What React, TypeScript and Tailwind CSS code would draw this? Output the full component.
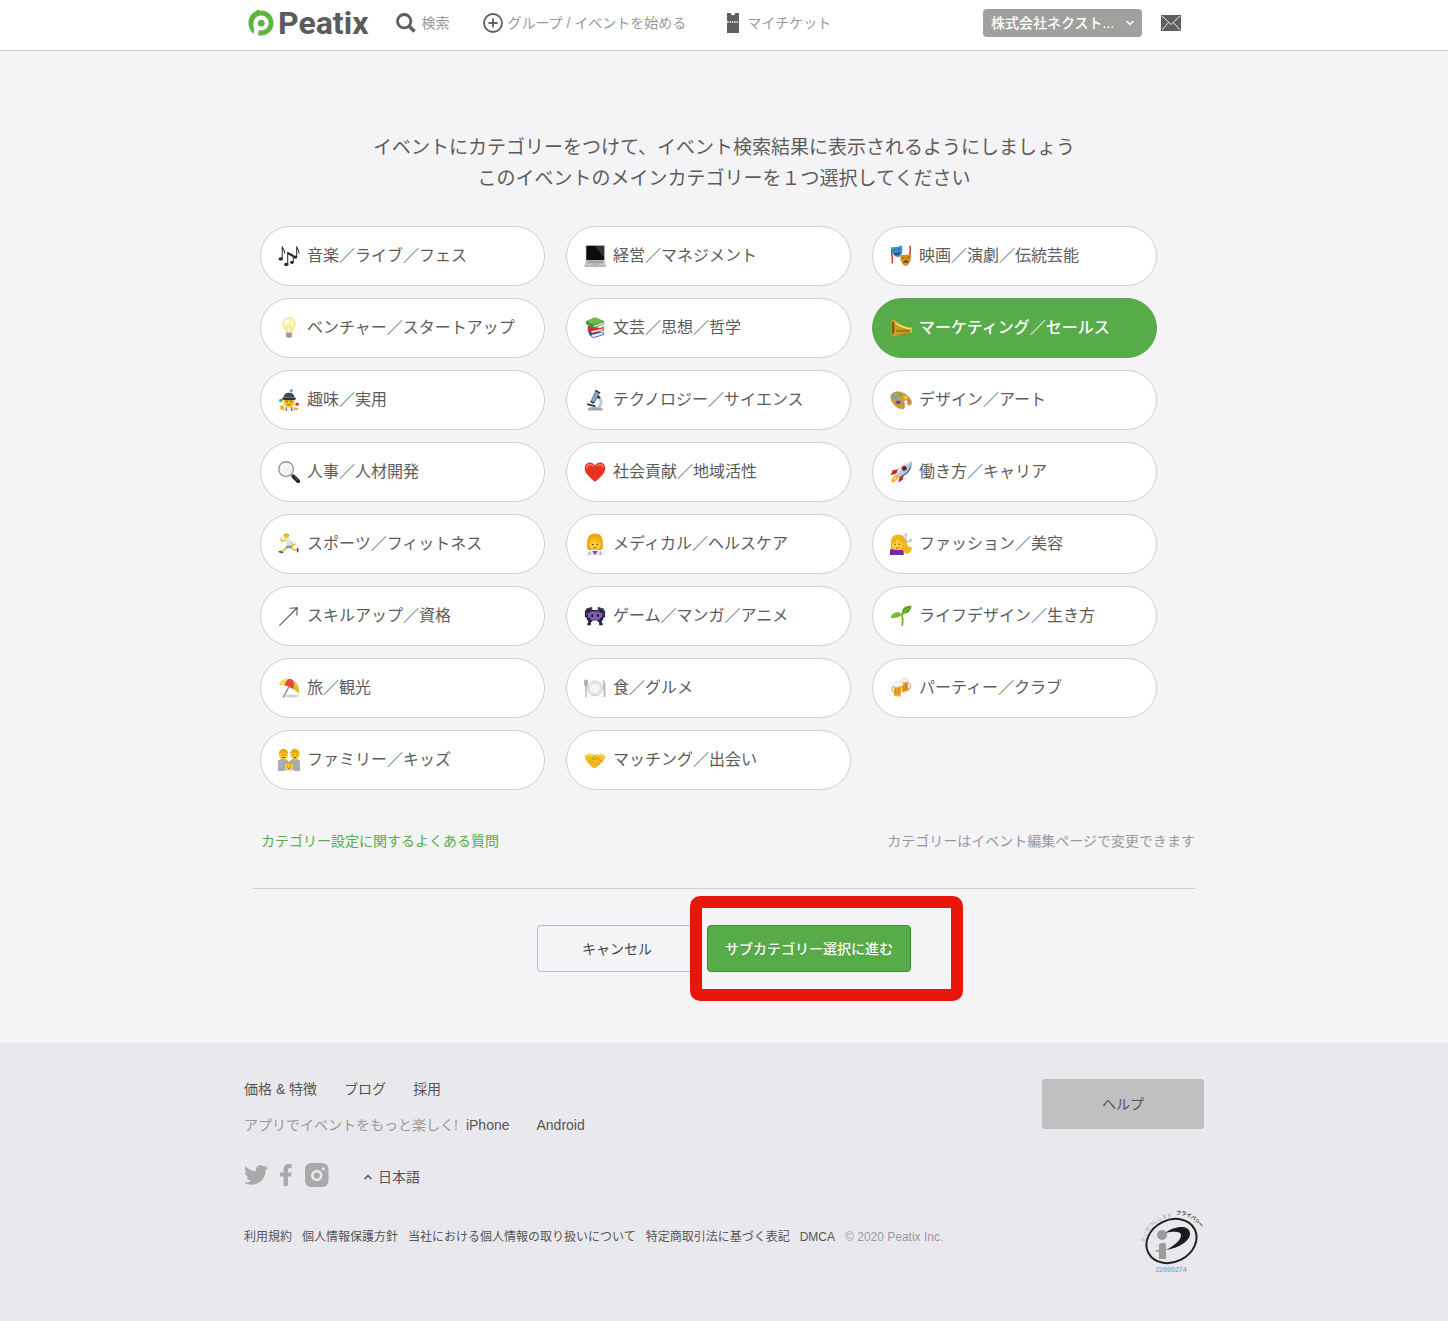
import { useState } from 'react';
import type { ReactNode } from 'react';
import { FaFacebookF, FaTwitter } from 'react-icons/fa';

const icons: Record<string, ReactNode> = {
  music: (
    <g fill="none" stroke="#1f2a33" strokeWidth="1.1">
      <path d="M4.600 15V1.400c.4 3.600 3.200 4 2.600 8M10.600 21V8.400l6 3.200V19M20.400 13V1.400c.4 3.600 3 4 2.400 8" />
      <path d="M10.600 8.800l6 3.200" strokeWidth="2.200" />
      <g fill="#1f2a33" stroke="none">
        <ellipse cx="3" cy="15.200" rx="2.400" ry="1.800" />
        <ellipse cx="9" cy="21.200" rx="2.400" ry="1.800" />
        <ellipse cx="15.200" cy="19" rx="2" ry="1.600" />
        <ellipse cx="18.800" cy="13.200" rx="2.300" ry="1.800" />
      </g>
    </g>
  ),
  bulb: (
    <g>
      <path d="M12 1C7.800 1 5.200 4.200 5.200 8c0 3.600 3 5 3.400 9h6.800c.4-4 3.400-5.400 3.400-9 0-3.800-2.600-7-6.800-7z" fill="#fdf3b4" stroke="#ecd67c" />
      <path d="M8 7.500c0-2.500 1.500-4 3.500-4" fill="none" stroke="#fffdf0" strokeWidth="2" />
      <path d="M10.500 16l-.8-6 2.300 1.500 2.300-1.500-.8 6" fill="none" stroke="#ecd88c" strokeWidth=".8" />
      <path d="M8.800 17h6.400v3.600L13.400 23h-2.800l-1.800-2.400z" fill="#b3b3b0" />
      <path d="M9 19h6M9.200 21h5.600" stroke="#6d6d6d" strokeWidth=".8" />
    </g>
  ),
  juggler: (
    <g>
      <path d="M6 24v-3l4-2h4.500l4 2v3z" fill="#e9edf2" />
      <path d="M9 20v4M15 20v4" stroke="#525d6b" strokeWidth="1.200" />
      <circle cx="12" cy="14" r="6.200" fill="#f8c522" />
      <path d="M6 11c0-5.500 2-7 6-7s6 1.500 6 7z" fill="#454b54" />
      <ellipse cx="12" cy="10.600" rx="7.800" ry="1.800" fill="#30363e" />
      <path d="M7 9.200h10" stroke="#6e7680" />
      <circle cx="9.800" cy="14" r=".8" fill="#5a3a10" />
      <circle cx="14.200" cy="14" r=".8" fill="#5a3a10" />
      <path d="M10 17.200h4" stroke="#a4572a" />
      <circle cx="14.500" cy="2" r="1.900" fill="#67a9ee" />
      <circle cx="3" cy="12.500" r="1.900" fill="#36b258" />
      <circle cx="21" cy="16.500" r="1.900" fill="#e03434" />
      <path d="M2 19l3-1.500 2 2.500-1 3H3zM22 21l-4-1-1.500 3h5.500z" fill="#f3b51c" />
    </g>
  ),
  magnifier: (
    <g>
      <path d="M14.500 14.500l3 3" stroke="#8b949c" strokeWidth="2.400" />
      <path d="M17 17l5 5" stroke="#20262c" strokeWidth="4.400" strokeLinecap="round" />
      <path d="M17.500 16.500l4.500 4.500" stroke="#6c757d" strokeWidth="1" />
      <circle cx="8.800" cy="8.800" r="8" fill="#f1f4f6" stroke="#87909a" strokeWidth="1.400" />
      <path d="M4.500 8.500c0-2.500 2-4.200 4.500-4.200" fill="none" stroke="#fff" strokeWidth="1.500" />
    </g>
  ),
  runner: (
    <g fill="none" strokeLinecap="round">
      <path d="M8 8l-4 1-.5-3M14 9.500l2 4 3-1.500" stroke="#f2bc28" strokeWidth="1.700" />
      <path d="M10 15l-3.500 4-3.500 1M13.500 15l3 3 4 .5" stroke="#f2bc28" strokeWidth="2" />
      <path d="M11 8.500l.5 4.500" stroke="#dde4ec" strokeWidth="5" />
      <path d="M10 15.500l4-.5" stroke="#8a94a2" strokeWidth="3" />
      <path d="M1.500 20.500l3.500.8M21.500 17v3.500" stroke="#3a4a99" strokeWidth="1.700" />
      <circle cx="9" cy="3.600" r="2.700" fill="#f5c22c" />
      <path d="M6.600 2.600c1-2 4-2 5 0" stroke="#d89a10" strokeWidth="1.200" />
    </g>
  ),
  arrow: <path d="M1.500 22.500L21 3M12.500 3.500L21 3l-.5 8.500" fill="none" stroke="#555" strokeWidth="1.200" />,
  umbrella: (
    <g>
      <ellipse cx="15" cy="20.800" rx="8" ry="1.600" fill="#d8d3cc" />
      <path d="M13 9L5.500 22.500" stroke="#8b8378" strokeWidth="1.300" />
      <path d="M1 8.500C3 3 9 .5 14.500 2.500 20.500 4.500 24 11 23 18.500c-3-3.500-6-5-10-7S5.500 8.500 1 8.500z" fill="#e0bd3c" />
      <path d="M12 2c-3 2-4.500 4.500-5 7 2 .2 4 1.200 6 2.200 1.200.6 2.400 1.200 3.500 1.900C18.500 9 17.500 4 14.500 2.500z" fill="#e4483c" />
      <path d="M12 2c-5 0-8.500 2.500-11 6.500 2.500-.6 4-.2 6 .5.500-2.500 2-5 5-7z" fill="#f2dc62" />
    </g>
  ),
  family: (
    <g>
      <path d="M0 24V13.500c0-2 3-2.500 6-2.500s5 1 5 3v10zM13 24V13.500c0-2 3-2.500 6-2.500s5 1 5 3v10z" fill="#a9abae" />
      <circle cx="6" cy="6.300" r="5" fill="#f8c928" />
      <circle cx="18.500" cy="6.300" r="5" fill="#f8c928" />
      <path d="M1 5.500C1 1.500 3.500 0 6 0s5 1.500 5 5.500C9 3.500 3 3.500 1 5.500zM13.500 5.500c0-4 2.500-5.500 5-5.500s5 1.500 5 5.500c-2-2-8-2-10 0z" fill="#e8a90f" />
      <path d="M4 6.500h1M7.500 6.500h1M16.500 6.500h1M20 6.500h1M4.800 9.200h2.600M17.200 9.200h2.600" stroke="#70480d" strokeWidth="1.100" />
      <path d="M6.500 24c0-2 2-2.500 5.500-2.500s5.500.5 5.500 2.500z" fill="#dcdfe2" />
      <circle cx="12" cy="18.500" r="4.500" fill="#f9cc30" />
      <path d="M7.500 17.500c.5-5 8.500-5 9 0-2-1.500-7-1.500-9 0z" fill="#e5a80f" />
      <path d="M10 18.800h1M13.200 18.800h1M11 21h2" stroke="#70480d" />
    </g>
  ),
  laptop: (
    <g>
      <path d="M2 .5h20.500v16.500H2z" fill="#7d8084" />
      <path d="M2.800 1h19v15.500h-19z" fill="#0b0c0e" />
      <path d="M12 1h9.800v13z" fill="#303338" />
      <path d="M2 17h20.500l1.500 5.500H.5z" fill="#c4c6c9" />
      <path d="M4 17.800h16.500l.8 2H3.300z" fill="#9b9ea2" />
      <path d="M9.500 20.500h5.500l.4 1.500H9z" fill="#afb1b5" />
      <path d="M.5 22.500H24v1.200H.5z" fill="#989a9d" />
    </g>
  ),
  books: (
    <g>
      <path d="M4 14.500l15 2.500 2.500-1v3.500L10 23l-4-3z" fill="#2e56a3" />
      <path d="M8 19.500l12.500-2.500v2L9.500 22z" fill="#eef0f2" />
      <path d="M4 9.500l14 2.500 3.500-2v5l-12.500 3-5-3.500z" fill="#cf2f2b" />
      <path d="M8 15.500l12.500-3v2L8.500 17.300z" fill="#f3efe9" />
      <path d="M2 4.500l10-4 10 4v3.500l-11.500 4L2.500 8z" fill="#3c8f34" />
      <path d="M2 4.500l10-4 10 4L10.500 8.500z" fill="#6cbb4c" />
      <path d="M10.500 9.500L21.500 5.700v1.700L10.500 11.200z" fill="#edf1e9" />
    </g>
  ),
  microscope: (
    <g>
      <path d="M4 23.500c0-2.500 1.500-3.500 4-3.500h9c2 0 3.500 1 3.500 3.500z" fill="#93a7b6" />
      <path d="M14 8c5 1.500 6.500 8.500 1.500 12.500" fill="none" stroke="#b7cbd8" strokeWidth="3" />
      <path d="M3.500 16.500l9 2.500" stroke="#2d353d" strokeWidth="2" />
      <path d="M12 2.500l5 3-5 9.500-4.500-2.500z" fill="#6f8da3" />
      <path d="M12.500 4.500l1.500 1-4.500 8" fill="none" stroke="#c2dceb" />
      <path d="M13 .8l5 3-1 1.500-5.500-3zM7.500 12.500l4 2.200-.8 1.600-4-2.200z" fill="#2d353d" />
      <circle cx="16" cy="9" r="1.700" fill="#36404a" />
    </g>
  ),
  heart: (
    <g>
      <path d="M12 23C8 19 .8 14.500 .8 8 .8 4 3.300 1.500 6.500 1.500c2.500 0 4.500 1.500 5.500 3.500 1-2 3-3.500 5.500-3.500 3.200 0 5.700 2.500 5.700 6.500C23.200 14.500 16 19 12 23z" fill="#e8321f" />
      <path d="M3 8c0-2.500 1.500-4 3.800-4 1.800 0 3.200 1 4 2.200M14 5.500C15 4.400 16 4 17.300 4c2 0 3.300 1.200 3.500 3" fill="none" stroke="#f68272" strokeWidth="1.500" />
    </g>
  ),
  doctor: (
    <g>
      <path d="M3.500 16C2.500 5 5.500 .5 12 .5S21.500 5 20.500 16c0 1.500-1.500 2.500-3 2.500H6.500c-1.500 0-3-1-3-2.500z" fill="#e9a90e" />
      <path d="M3 24c0-3.500 3-4.500 9-4.500s9 1 9 4.500z" fill="#dde4eb" />
      <path d="M9 19.500h6l-3 4.500z" fill="#8f45b3" />
      <circle cx="12" cy="12.500" r="6.300" fill="#fbd03a" />
      <path d="M5 12C5 3 18 1.500 19 12c-4 0-6-1.500-8-4-1.500 2.500-3 3.500-6 4z" fill="#f4b91c" />
      <circle cx="9.500" cy="12.500" r=".9" fill="#5b3b0d" />
      <circle cx="14.500" cy="12.500" r=".9" fill="#5b3b0d" />
      <path d="M10 15.700c1 1 3 1 4 0" fill="none" stroke="#b04625" />
      <path d="M6 20V24M18 20V24" stroke="#9ba9b5" />
    </g>
  ),
  alien: (
    <g>
      <path d="M1 6h1.500V3.500H6V2.500h3v3h6v-3h3v1h3.500V6H23v7.500h-2v3h-1.500v3.500h1V22h-4v-3.500H15V17H9v1.500H7.500V22h-4v-2h1v-3.500H3v-3H1z" fill="#2a2238" />
      <path d="M7 7h10v1.500h2.500V14H17v2H7v-2H4.500V8.500H7z" fill="#7f62b8" />
      <path d="M2.500 8H4v3.500H2.500zM20 8h1.500v3.500H20zM7 4h1.500v2H7zM15.500 4H17v2h-1.500z" fill="#5d4791" />
      <path d="M8 10h2v3H8zM14 10h2v3h-2z" fill="#17121f" />
    </g>
  ),
  plate: (
    <g>
      <circle cx="12" cy="12.500" r="8.200" fill="#e6e7e9" stroke="#c3c5c8" strokeWidth=".8" />
      <circle cx="12" cy="12.500" r="5.800" fill="#f5f5f6" stroke="#d3d4d7" strokeWidth=".7" />
      <path d="M.8 3v5c0 1 .5 1.500 1.400 1.700V22M3.500 3v5c0 1-.5 1.500-1.300 1.700M2.200 3v6" fill="none" stroke="#98a4ae" strokeWidth="1.200" />
      <path d="M21 13V3.500c1.800 1 2.400 5 2 9.500v8.500h-1.300V13z" fill="#b5c0c9" stroke="#b3bdc6" strokeWidth=".8" />
    </g>
  ),
  handshake: (
    <g>
      <path d="M.5 7.500L5 5l7 1.500L19 5l4.500 3-3 6-7.500 6.500c-1.500 1-3 .5-4-.5l-6-6z" fill="#f2bd20" />
      <path d="M12 6.500l-3 4c1 1.500 3 1 5-.7l6 4.200" fill="none" stroke="#c78d0e" strokeWidth=".9" />
      <path d="M5.500 13.500l2-2M7.500 16l2-2M10 18l1.500-1.800M14.500 14l3 2.800M12.500 16l2.500 2.500" stroke="#c78d0e" strokeWidth=".9" />
      <path d="M2.500 8L5.500 6.500l5 1M13.500 7l4.500-1 3.500 2.500" fill="none" stroke="#ffe27a" strokeWidth="1.300" />
    </g>
  ),
  masks: (
    <g>
      <path d="M2 5c-1 5 1.500 8 .3 15M21.500 1c2 4-1 8 .5 13" fill="none" stroke="#cb3127" strokeWidth="1.600" />
      <path d="M1 2.500c4 0 8-.5 12-2 1 5 .5 11-3.500 12.500C4.500 13.500 1.500 9 1 2.500z" fill="#3a8fd0" />
      <path d="M3.500 6.300l2-.8M8.500 5l2-.7M4.500 8.800c2 1.500 4.500 1 6-1-.5 3-4.500 4-6 1z" fill="#133d62" stroke="#133d62" strokeWidth=".9" />
      <path d="M11 10.500c4 .8 8 .5 12-1 .8 5-1 11.500-5.500 13.500C13 22 11 17 11 10.500z" fill="#d3912c" />
      <path d="M13.500 14l2 .4M18.800 14.100l2-.6M14.800 19c1.500-2.500 4-2.500 5 0-1.500-.8-3.500-.8-5 0z" fill="#5e350b" stroke="#5e350b" strokeWidth=".9" />
    </g>
  ),
  horn: (
    <g>
      <path d="M10 17.500l5 3 1.500-3" fill="none" stroke="#a57a16" strokeWidth="1.400" />
      <path d="M4 2.500C8 7 15 10 22.500 12v4.500L4 21z" fill="#c99a1e" />
      <path d="M5 5.500c5 4 10 6 17 7.500" fill="none" stroke="#f7e07a" strokeWidth="1.800" />
      <path d="M6 15.500c6-.5 10-.5 16-.5" fill="none" stroke="#94700f" strokeWidth="1.400" />
      <ellipse cx="3.800" cy="11.800" rx="2.800" ry="9.400" fill="#d2a529" />
      <ellipse cx="3.400" cy="12" rx="1.600" ry="7.400" fill="#7d5c10" />
      <path d="M22 11.300h2v5.600h-2z" fill="#e5bd3c" />
    </g>
  ),
  palette: (
    <g>
      <path d="M.8 9C.5 4.500 6 2 12 3.500c6 1.500 11 6.500 11.500 11 .2 2.500-1.500 4-3 3-1.500-.8-2.500-2.500-4-2-1.800.8.500 3.500-1 5.500-1 1.200-4.500 1-7.500-1C4 17.500 1 13 .8 9z" fill="#cf9844" stroke="#b27f35" strokeWidth=".5" />
      <ellipse cx="5.500" cy="8.500" rx="2.800" ry="2" fill="#40b5e8" />
      <ellipse cx="11" cy="6.300" rx="2.400" ry="1.600" fill="#4eb83d" />
      <ellipse cx="17" cy="9.300" rx="2.300" ry="1.700" fill="#eadb35" />
      <ellipse cx="20.500" cy="13.800" rx="1.700" ry="1.900" fill="#e26963" />
      <ellipse cx="9" cy="14.500" rx="2.800" ry="2" fill="#7441b0" />
      <circle cx="17.300" cy="14.200" r="1.800" fill="#fff" />
    </g>
  ),
  rocket: (
    <g>
      <path d="M7 15l2.500 2.500c-1 3-4 5-8 6 0-4 2-7 5.500-8.500z" fill="#f4a51f" />
      <path d="M6 17l1.500 1.500c-1 1.500-2.500 2-4 2.500.2-1.500 1-3 2.500-4z" fill="#fdea75" />
      <path d="M9 9L3 10l-2.500 5.500L7 14zM15 15l-1 5.500L9 23.500 10.500 17z" fill="#d3291f" />
      <path d="M6.500 14.500C9 7 14 1.500 23.500.5c-.5 9.500-6 14.500-13.500 17.500z" fill="#b9cbd9" />
      <path d="M9 12.500C12 6.500 16 3 21 2" fill="none" stroke="#f3f8fb" strokeWidth="1.600" />
      <path d="M9.500 17.500C17 14.500 22.500 9 23.500.5c1 11-6 15.500-13 17.500z" fill="#4473a6" />
      <circle cx="15.500" cy="8" r="2.500" fill="#243142" stroke="#cf3a30" />
    </g>
  ),
  haircut: (
    <g>
      <path d="M0 24v-6l4-1h8l3 2v5z" fill="#7b2aa5" />
      <path d="M1 17C0 7 2 1.500 9 1.500c6 0 8 4 9 8.500s3 6 6 5.500c-.5 5-3 7-6 7-2.500 0-3-3-4-4H5z" fill="#f2b51c" />
      <circle cx="8" cy="12.500" r="6" fill="#fcd03a" />
      <path d="M2 11.500C3 4.500 11 3 14 10.500c-3-.5-5-2-6-4-1.500 3-3 4-6 5z" fill="#eeae15" />
      <path d="M5 12.500h1.200M9.500 12.500h1.200" stroke="#5b3b0d" strokeWidth="1.400" />
      <path d="M6.300 16c1 .8 2.400.8 3.400 0" fill="none" stroke="#b04625" />
      <path d="M17.500 3.500v7l5-2.500M16 10.500l5-2" fill="none" stroke="#a9b1b8" />
      <circle cx="17.500" cy="2" r="1.300" fill="none" stroke="#a9b1b8" />
      <circle cx="22.500" cy="8" r="1.100" fill="none" stroke="#a9b1b8" />
    </g>
  ),
  sprout: (
    <g>
      <path d="M13.500 22c1-5 .3-8-.5-11M13 11L15 7.500" fill="none" stroke="#77b82d" strokeWidth="2" strokeLinecap="round" />
      <path d="M.8 14.500C2 8.500 7 6 13 9.500c-2.500 4.500-6 4-12.200 5z" fill="#69b91f" />
      <path d="M13.500 9.500C12.500 4 16 .5 23.500 1c-1 6-4 8.500-10 8.500z" fill="#55a51d" />
      <path d="M3 12.500c3-2.500 6-3.200 9-2.800M15 8l6-5" fill="none" stroke="#9bdc4d" strokeWidth=".8" />
    </g>
  ),
  beers: (
    <g>
      <path d="M20 7c3-1 3.500 6-.5 6.500M5 10c-4-1-4 6 .5 7" fill="none" stroke="#c9b59c" strokeWidth="1.400" />
      <path d="M12 4l7.500-1 .5 12-6.500 1.500z" fill="#de9421" />
      <path d="M11.500 5c0-3 3-4 4.500-3.500 2-.8 4.500.5 4.500 3.500-2 1.500-3 0-4.500 1-1.500 1-3 .5-4.500-1z" fill="#f1ece2" stroke="#d3cabb" strokeWidth=".5" />
      <path d="M4.500 9.500l8.500-.5-1.500 12.500-7.500-1z" fill="#efad31" />
      <path d="M3.500 9c-.5-3 2-4 4-3.300C9.500 4 14 5 14.500 8.500c-1.500 2.500-3 1-4.500 1.800C7.500 11 5.500 12 3.500 9z" fill="#faf7f0" stroke="#d3cabb" strokeWidth=".5" />
      <path d="M6.500 12.500l-.3 6M9.800 12.500l-.6 6.500M17 7.500v7" stroke="#c47d18" strokeWidth="1" />
    </g>
  ),
};

const categories = [
  { icon: 'music', label: '音楽／ライブ／フェス' },
  { icon: 'laptop', label: '経営／マネジメント' },
  { icon: 'masks', label: '映画／演劇／伝統芸能' },
  { icon: 'bulb', label: 'ベンチャー／スタートアップ' },
  { icon: 'books', label: '文芸／思想／哲学' },
  { icon: 'horn', label: 'マーケティング／セールス' },
  { icon: 'juggler', label: '趣味／実用' },
  { icon: 'microscope', label: 'テクノロジー／サイエンス' },
  { icon: 'palette', label: 'デザイン／アート' },
  { icon: 'magnifier', label: '人事／人材開発' },
  { icon: 'heart', label: '社会貢献／地域活性' },
  { icon: 'rocket', label: '働き方／キャリア' },
  { icon: 'runner', label: 'スポーツ／フィットネス' },
  { icon: 'doctor', label: 'メディカル／ヘルスケア' },
  { icon: 'haircut', label: 'ファッション／美容' },
  { icon: 'arrow', label: 'スキルアップ／資格' },
  { icon: 'alien', label: 'ゲーム／マンガ／アニメ' },
  { icon: 'sprout', label: 'ライフデザイン／生き方' },
  { icon: 'umbrella', label: '旅／観光' },
  { icon: 'plate', label: '食／グルメ' },
  { icon: 'beers', label: 'パーティー／クラブ' },
  { icon: 'family', label: 'ファミリー／キッズ' },
  { icon: 'handshake', label: 'マッチング／出会い' },
];

const legalLinks = [
  '利用規約',
  '個人情報保護方針',
  '当社における個人情報の取り扱いについて',
  '特定商取引法に基づく表記',
  'DMCA',
];

function Header() {
  return (
    <header className="border-b border-[#cfcfd3] bg-white">
      <div className="mx-auto flex h-[50px] max-w-[960px] items-center pr-[23px] pb-1 pl-1 text-sm leading-5 text-[#999]">
        <a href="#" className="flex items-center gap-1">
          <svg width="26" height="28" viewBox="0 0 26 28" aria-hidden="true">
            <path
              d="M7.500 2.600L9.500.4l1.800 1.200C19.500.4 25.500 6.500 25.500 14c0 6.500-4.500 12-12 12.600H9.300C3.800 25 .5 19.500.5 14 .5 8.800 3.200 4.600 7.500 2.600z"
              fill="#5cb53f"
            />
            <path d="M5.400 14.200c0-4.400 3.400-7.600 7.700-7.600s7.600 3.200 7.600 7.400-3.300 7.400-7.400 7.400c-.8 0-1.600-.1-2.400-.4L9.600 28H5.400l.9-7.500c-.7-1.800-.9-4-.9-6.300z" fill="#fff" />
            <circle cx="13.300" cy="14.200" r="3.400" fill="#5cb53f" />
          </svg>
          <span className="font-['Roboto',sans-serif] text-[32px] leading-8 font-bold text-[#5b5b5b]">Peatix</span>
        </a>
        <a href="#" className="ml-7 flex items-center gap-[5px]">
          <svg width="20" height="20" viewBox="0 0 20 20" fill="none" stroke="#5f5f5f" aria-hidden="true">
            <circle cx="8.200" cy="8.200" r="6.700" strokeWidth="2.800" />
            <path d="M13 13l5.500 5.500" strokeWidth="3.600" />
          </svg>
          検索
        </a>
        <a href="#" className="ml-[34px] flex items-center gap-1">
          <svg width="20" height="20" viewBox="0 0 20 20" fill="none" stroke="#5f5f5f" strokeWidth="1.800" aria-hidden="true">
            <circle cx="10" cy="10" r="9" />
            <path d="M10 5.500v9M5.500 10h9" />
          </svg>
          グループ / イベントを始める
        </a>
        <a href="#" className="ml-[41px] flex items-center gap-2">
          <svg width="12" height="20" viewBox="0 0 12 20" aria-hidden="true">
            <path d="M0 0h3.800a2.200 2.200 0 0 0 4.400 0H12v20H0z" fill="#5f5f5f" />
            <path d="M0 9h12" stroke="#fff" strokeWidth="1.600" strokeDasharray="1.400 1" />
          </svg>
          マイチケット
        </a>
        <button
          type="button"
          className="ml-auto flex h-7 w-[159px] items-center justify-between rounded-[4px] bg-[#a0a09e] px-2 font-medium text-white"
        >
          株式会社ネクスト...
          <svg width="8" height="6" viewBox="0 0 8 6" fill="none" stroke="#fff" strokeWidth="1.600" aria-hidden="true">
            <path d="M.6 1L4 4.400 7.400 1" />
          </svg>
        </button>
        <a href="#" aria-label="メッセージ" className="ml-[19px]">
          <svg width="20" height="16" viewBox="0 0 20 16" aria-hidden="true">
            <path d="M0 0h20v16H0z" fill="#5f5f5f" />
            <path d="M1 1l9 8.500L19 1M1 15l6.500-7.500M19 15l-6.500-7.500" fill="none" stroke="#fff" strokeWidth=".9" />
          </svg>
        </a>
      </div>
    </header>
  );
}

function PrivacyMark() {
  return (
    <svg width="64" height="64" viewBox="0 0 64 64" className="overflow-visible" role="img" aria-label="プライバシーマーク">
      <defs>
        <path id="arc-left" d="M5 33C6 21 16 9 34 8" />
        <path id="arc-right" d="M36 6C46 5 54 9 62 20" />
      </defs>
      <text fontSize="5" fill="#9a9a9a">
        <textPath href="#arc-left">たいせつにします</textPath>
      </text>
      <text fontSize="5" fontWeight="700" fill="#333">
        <textPath href="#arc-right">プライバシー</textPath>
      </text>
      <ellipse cx="31.500" cy="32" rx="26" ry="21" transform="rotate(-27 31.500 32)" fill="none" stroke="#222" strokeWidth="2" />
      <path d="M25 24c9-7 24-9 25 0 .6 8-11 15-24 17 9-5 15-10 15-15 0-4-8-4-16-2z" fill="#1c1c1c" />
      <circle cx="22" cy="26" r="5" fill="#9b9b9b" />
      <path d="M19 36c2-3 7-3 7 0v14h-7v-7l-5-1 5-1.500z" fill="#9b9b9b" />
      <text x="31" y="63" textAnchor="middle" fontSize="7" fontWeight="700" fill="#8fb0bd">
        22000274
      </text>
    </svg>
  );
}

function Footer() {
  return (
    <footer className="bg-[#e9e9ed]">
      <div className="mx-auto flex max-w-[960px] justify-between pt-9 pb-12 text-sm leading-5 text-[#555]">
        <div>
          <nav className="flex gap-[27px]">
            <a href="#">価格 &amp; 特徴</a>
            <a href="#">ブログ</a>
            <a href="#">採用</a>
          </nav>
          <p className="mt-4 flex">
            <span className="mr-2 text-[#999]">アプリでイベントをもっと楽しく!</span>
            <a href="#">iPhone</a>
            <a href="#" className="ml-[27px]">Android</a>
          </p>
          <div className="mt-7 flex h-6 items-center text-[#a9a9a9]">
            <a href="#" aria-label="Twitter">
              <FaTwitter size={24} />
            </a>
            <a href="#" aria-label="Facebook" className="ml-[7px]">
              <FaFacebookF size={22} />
            </a>
            <a href="#" aria-label="Instagram" className="ml-2">
              <svg width="24" height="24" viewBox="0 0 24 24" aria-hidden="true">
                <rect width="23.500" height="24" rx="6" fill="#a9a9a9" />
                <circle cx="11.800" cy="12.500" r="4.400" fill="none" stroke="#e9e9ed" strokeWidth="2.600" />
                <circle cx="18.300" cy="5.800" r="1.600" fill="#e9e9ed" />
              </svg>
            </a>
            <button type="button" className="ml-[35px] flex items-center gap-[6px] self-end text-[#555]">
              <svg width="8" height="6" viewBox="0 0 8 6" fill="none" stroke="#555" strokeWidth="1.500" aria-hidden="true">
                <path d="M.6 5L4 1.600 7.400 5" />
              </svg>
              日本語
            </button>
          </div>
          <div className="mt-10 flex gap-[10px] text-xs leading-5">
            {legalLinks.map((link) => (
              <a key={link} href="#">
                {link}
              </a>
            ))}
            <span className="text-[#999]">© 2020 Peatix Inc.</span>
          </div>
        </div>
        <div className="flex flex-col items-end">
          <a href="#" className="flex h-[50px] w-[162px] items-center justify-center rounded-[3px] bg-[#c0c0c1]">
            ヘルプ
          </a>
          <div className="mt-20">
            <PrivacyMark />
          </div>
        </div>
      </div>
    </footer>
  );
}

export default function App() {
  const [selected, setSelected] = useState('horn');

  return (
    <div lang="ja" className="min-h-screen bg-[#f4f4f7] font-['Liberation_Sans','Noto_Sans_CJK_JP',sans-serif] text-[#5c5c5c]">
      <Header />

      <main className="mx-auto max-w-[942px] pt-[81px] pb-[71px]">
        <h1 className="text-center text-[19px] leading-[31px]">
          <span className="block">イベントにカテゴリーをつけて、イベント検索結果に表示されるようにしましょう</span>
          <span className="block">このイベントのメインカテゴリーを１つ選択してください</span>
        </h1>

        <div className="mt-8 grid grid-cols-[repeat(3,285px)] gap-x-[21px] gap-y-3 pl-[7px]">
          {categories.map(({ icon, label }) => (
            <button
              key={icon}
              type="button"
              aria-pressed={icon === selected}
              onClick={() => setSelected(icon)}
              className={
                icon === selected
                  ? 'flex h-[60px] items-center gap-[7px] rounded-full border border-[#57ab49] bg-[#57ab49] px-[17px] font-medium text-white'
                  : 'flex h-[60px] items-center gap-[7px] rounded-full border border-[#cfcfd1] bg-white px-[17px]'
              }
            >
              <svg width="22" height="22" viewBox="0 0 24 24" aria-hidden="true">
                {icons[icon]}
              </svg>
              <span className="text-base leading-5">{label}</span>
            </button>
          ))}
        </div>

        <div className="mt-[41px] flex justify-between pl-2 text-sm leading-5">
          <a href="#" className="text-[#57ab49]">カテゴリー設定に関するよくある質問</a>
          <span className="text-[#999]">カテゴリーはイベント編集ページで変更できます</span>
        </div>

        <hr className="mt-[37px] border-[#cfcfd3]" />

        <div className="mt-9 flex justify-center gap-[10px] text-sm">
          <button type="button" className="h-[47px] w-[160px] rounded-[4px] border border-[#b9b9c6] text-[#444]">
            キャンセル
          </button>
          <div className="relative">
            <button
              type="submit"
              className="h-[47px] w-[204px] rounded-[4px] border border-[#3f8c35] bg-[#57ab49] font-medium text-white text-shadow-2xs"
            >
              サブカテゴリー選択に進む
            </button>
            <div className="pointer-events-none absolute -top-[29px] -left-[17px] h-[105px] w-[273px] rounded-[10px] border-[12px] border-[#e8170c]" />
          </div>
        </div>
      </main>

      <Footer />
    </div>
  );
}
